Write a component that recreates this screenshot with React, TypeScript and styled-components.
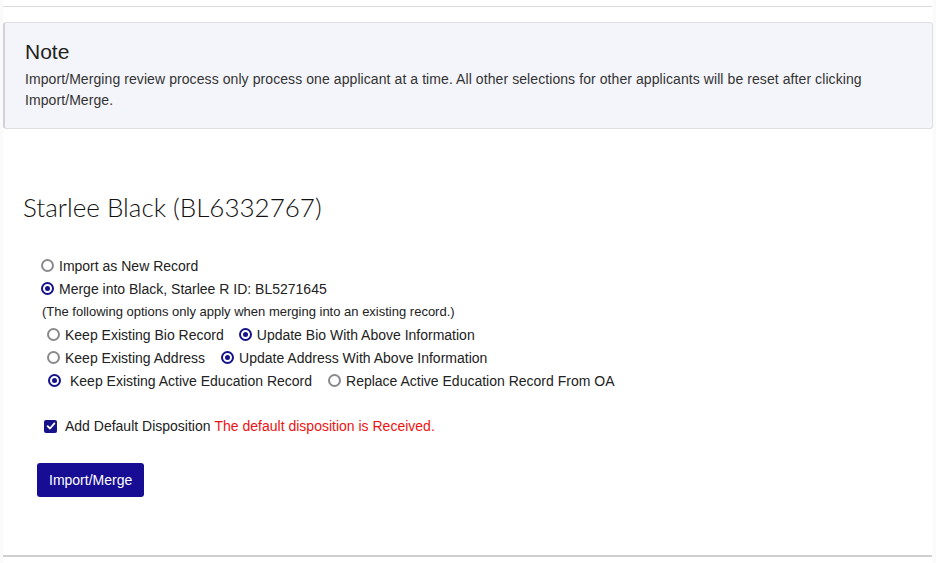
import React, { useState } from 'react';
import styled, { createGlobalStyle } from 'styled-components';

const GlobalStyle = createGlobalStyle`
  html, body {
    margin: 0;
    padding: 0;
    background: #fafafa;
  }
  body {
    font-family: 'Liberation Sans', Arial, sans-serif;
    font-size: 14px;
    color: #222;
  }
`;

const Page = styled.div`
  margin: 0 3px;
  background: #fff;
  min-height: 563px;
  padding-top: 6px;
  box-sizing: border-box;
`;

const TopRule = styled.div`
  height: 1px;
  background: #d9d9e0;
  margin-right: 1px;
`;

const NoteBox = styled.div`
  margin-top: 15px;
  background: #f4f5fa;
  border: 1px solid #dedee4;
  border-left: 2px solid #d2d2d8;
  border-radius: 3px;
  padding: 17px 20px 19px 20px;
  height: 107px;
  box-sizing: border-box;
`;

const NoteTitle = styled.h3`
  margin: 0 0 5px 0;
  font-size: 21px;
  font-weight: 400;
  color: #222;
  line-height: 24px;
`;

const NoteText = styled.p`
  margin: 0;
  font-size: 14px;
  line-height: 21px;
  color: #333;
  letter-spacing: 0.08px;
`;

const Section = styled.div`
  padding: 62px 20px 0 20px;
  height: 428px;
  box-sizing: border-box;
  border-bottom: 2px solid #cfcfcf;
  margin-right: 1px;
`;

const Title = styled.h2`
  margin: 0;
  font-family: 'Lato', 'Open Sans', sans-serif;
  font-weight: 300;
  font-size: 26px;
  line-height: 32px;
  color: #111;
`;

const OptionList = styled.div`
  margin-top: 31px;
  padding-left: 18px;
  display: flex;
  flex-direction: column;
`;

const Row = styled.div<{ indent?: number }>`
  display: flex;
  align-items: center;
  height: 23px;
  padding-left: ${(p) => p.indent ?? 0}px;
`;

const Hint = styled.div`
  height: 23px;
  line-height: 23px;
  font-size: 13px;
  color: #222;
  padding-left: 1px;
`;

const Choice = styled.label<{ gap?: number; after?: number }>`
  display: inline-flex;
  align-items: center;
  gap: ${(p) => p.gap ?? 5}px;
  margin-right: ${(p) => p.after ?? 0}px;
  cursor: pointer;
  color: #222;
`;

const RadioDot = styled.span<{ checked: boolean }>`
  width: 13px;
  height: 13px;
  box-sizing: border-box;
  border-radius: 50%;
  border: 2px solid ${(p) => (p.checked ? '#15128a' : '#8a8a8e')};
  display: inline-flex;
  align-items: center;
  justify-content: center;
  background: #fff;
  flex-shrink: 0;
  &::after {
    content: '';
    width: 5px;
    height: 5px;
    border-radius: 50%;
    background: ${(p) => (p.checked ? '#15128a' : 'transparent')};
  }
`;

const CheckRow = styled.div`
  display: flex;
  align-items: center;
  margin-top: 22px;
  padding-left: 21px;
  height: 24px;
`;

const CheckBox = styled.span`
  width: 13px;
  height: 13px;
  border-radius: 2px;
  background: #15128a;
  display: inline-flex;
  align-items: center;
  justify-content: center;
  margin-right: 8px;
`;

const Warn = styled.span`
  color: #ee1111;
  margin-left: 4px;
`;

const PrimaryButton = styled.button`
  margin-top: 25px;
  margin-left: 14px;
  height: 34px;
  padding: 0 12px;
  border: none;
  border-radius: 3px;
  background: #160d94;
  color: #fff;
  font-family: 'Liberation Sans', Arial, sans-serif;
  font-size: 14px;
  cursor: pointer;
`;

interface RadioProps {
  label: string;
  checked: boolean;
  onSelect: () => void;
  gap?: number;
  after?: number;
}

const Radio: React.FC<RadioProps> = ({ label, checked, onSelect, gap, after }) => (
  <Choice gap={gap} after={after} onClick={onSelect}>
    <RadioDot checked={checked} />
    {label}
  </Choice>
);

const App: React.FC = () => {
  const [mode, setMode] = useState('merge');
  const [bio, setBio] = useState('update');
  const [addr, setAddr] = useState('update');
  const [edu, setEdu] = useState('keep');

  return (
    <>
      <GlobalStyle />
      <Page>
        <TopRule />
        <NoteBox>
          <NoteTitle>Note</NoteTitle>
          <NoteText>
            Import/Merging review process only process one applicant at a time. All other selections for other
            applicants will be reset after clicking Import/Merge.
          </NoteText>
        </NoteBox>
        <Section>
          <Title>Starlee Black (BL6332767)</Title>
          <OptionList>
            <Row>
              <Radio label="Import as New Record" checked={mode === 'new'} onSelect={() => setMode('new')} />
            </Row>
            <Row>
              <Radio
                label="Merge into Black, Starlee R ID: BL5271645"
                checked={mode === 'merge'}
                onSelect={() => setMode('merge')}
              />
            </Row>
            <Hint>(The following options only apply when merging into an existing record.)</Hint>
            <Row indent={6}>
              <Radio
                label="Keep Existing Bio Record"
                checked={bio === 'keep'}
                onSelect={() => setBio('keep')}
                after={15}
              />
              <Radio label="Update Bio With Above Information" checked={bio === 'update'} onSelect={() => setBio('update')} />
            </Row>
            <Row indent={6}>
              <Radio
                label="Keep Existing Address"
                checked={addr === 'keep'}
                onSelect={() => setAddr('keep')}
                after={16}
              />
              <Radio
                label="Update Address With Above Information"
                checked={addr === 'update'}
                onSelect={() => setAddr('update')}
              />
            </Row>
            <Row indent={7}>
              <Radio
                label="Keep Existing Active Education Record"
                checked={edu === 'keep'}
                onSelect={() => setEdu('keep')}
                gap={9}
                after={16}
              />
              <Radio
                label="Replace Active Education Record From OA"
                checked={edu === 'replace'}
                onSelect={() => setEdu('replace')}
              />
            </Row>
          </OptionList>
          <CheckRow>
            <CheckBox>
              <svg width="10" height="10" viewBox="0 0 10 10">
                <path d="M1.6 5.2 L4 7.5 L8.4 2.4" stroke="#fff" strokeWidth="1.8" fill="none" strokeLinecap="round" strokeLinejoin="round" />
              </svg>
            </CheckBox>
            Add Default Disposition
            <Warn>The default disposition is Received.</Warn>
          </CheckRow>
          <PrimaryButton>Import/Merge</PrimaryButton>
        </Section>
      </Page>
    </>
  );
};

export default App;
